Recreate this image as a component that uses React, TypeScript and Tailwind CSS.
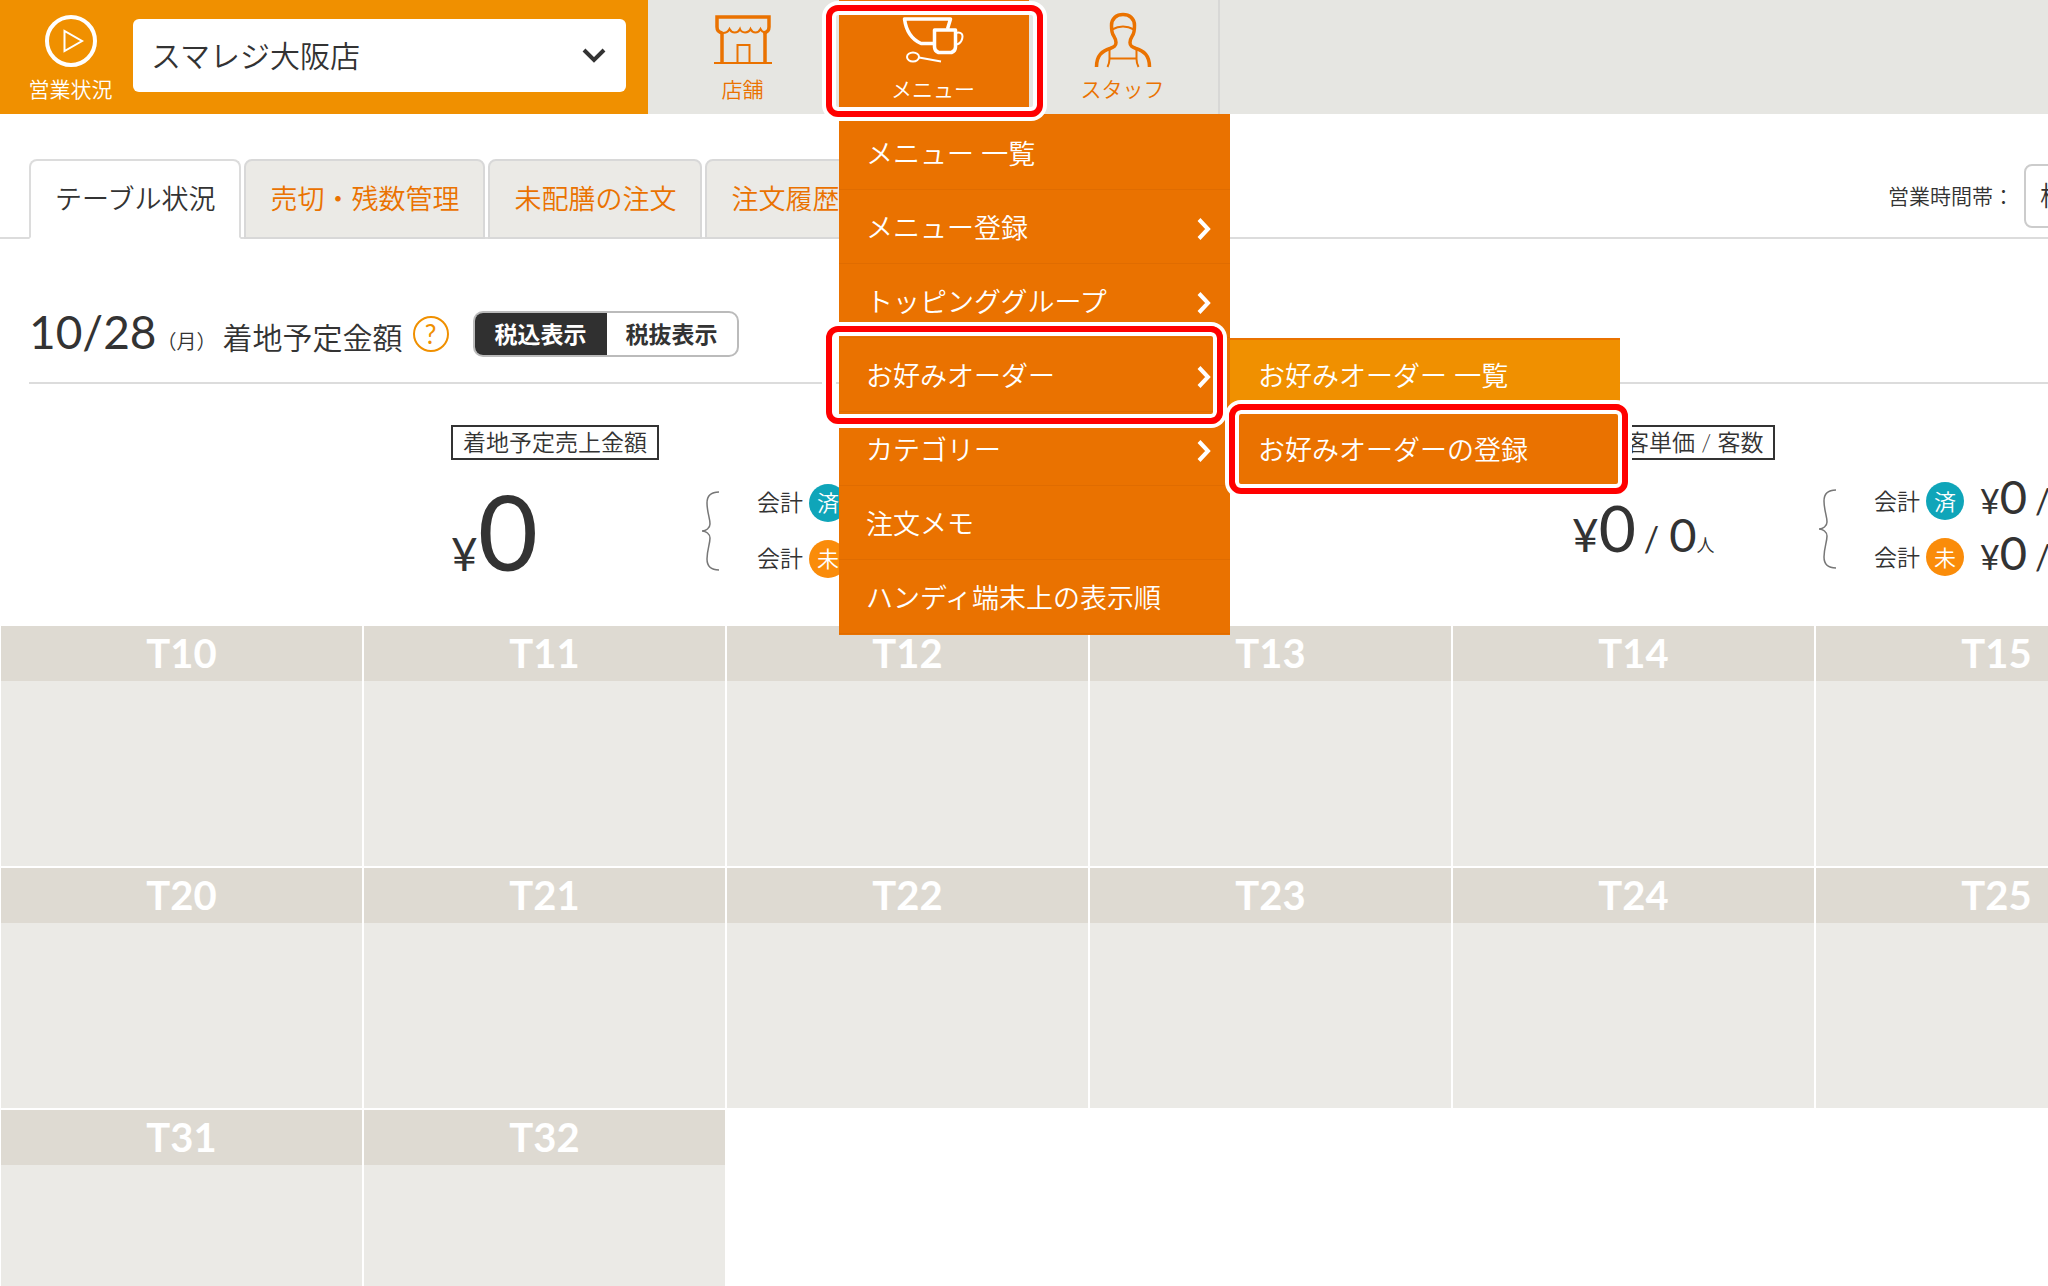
import type { ReactNode } from "react";

type MenuItem = {
  label: string;
  children?: string[];
  marked?: boolean;
};

const tabs = ["テーブル状況", "売切・残数管理", "未配膳の注文", "注文履歴"];

const menuItems: MenuItem[] = [
  { label: "メニュー 一覧" },
  { label: "メニュー登録", children: [] },
  { label: "トッピンググループ", children: [] },
  {
    label: "お好みオーダー",
    children: ["お好みオーダー 一覧", "お好みオーダーの登録"],
    marked: true,
  },
  { label: "カテゴリー", children: [] },
  { label: "注文メモ" },
  { label: "ハンディ端末上の表示順" },
];

const tables = [
  "T10", "T11", "T12", "T13", "T14", "T15",
  "T20", "T21", "T22", "T23", "T24", "T25",
  "T31", "T32",
];

/** Red frame with a white edge, laid over the step to click. */
function Marker({ className }: { className: string }) {
  return (
    <span
      aria-hidden
      className={`pointer-events-none absolute z-20 rounded-xl border-6 border-[#ff0000] shadow-[0_0_0_4px_#fff,inset_0_0_0_4px_#fff] ${className}`}
    />
  );
}

function PlayIcon() {
  return (
    <svg width="54" height="54" viewBox="0 0 54 54" fill="none" stroke="#fff" aria-hidden>
      <circle cx="27" cy="27" r="24" strokeWidth="4" />
      <path d="M20.5 17v20l17.5-10z" strokeWidth="2" />
    </svg>
  );
}

function ShopIcon() {
  return (
    <svg width="58" height="56" viewBox="0 0 58 56" fill="none" stroke="currentColor" aria-hidden>
      <path
        d="M8.5 21C5 20.5 3 18 3 15V5h52v10c0 3-2 5.500-5.500 6"
        strokeWidth="3.5"
      />
      <path
        d="M7 21c4 .5 7-1 8.500-4 2 4.500 8.500 4.500 10.500 0 1.500 4.500 8.500 4.500 10.500 0 2 4.500 8 4.500 10 0 1.500 3 3 4 6 4"
        strokeWidth="2"
      />
      <path d="M8 20v31M51 20v31" strokeWidth="3.5" />
      <path d="M0 51h58M23.500 51V33h12v18" strokeWidth="2" />
    </svg>
  );
}

function CupIcon() {
  return (
    <svg width="64" height="52" viewBox="0 -4 64 52" fill="none" stroke="#fff" aria-hidden>
      <path
        d="M32 27.500H20C10 23 5 14 3.500 3h46l-3 10"
        strokeWidth="3.5"
        strokeLinejoin="round"
      />
      <path
        d="M33.500 14h21v17q0 4-4 5.500H37.500q-4-1.500-4-5.500z"
        strokeWidth="3.5"
        strokeLinejoin="round"
      />
      <path d="M54.500 17c6-2 8.500 2 6 7.500-1 2-3 4-6 4" strokeWidth="2" />
      <ellipse cx="12" cy="41" rx="6" ry="4.5" strokeWidth="2" />
      <path d="M18 41.500l22 4" strokeWidth="2" />
    </svg>
  );
}

function StaffIcon() {
  return (
    <svg width="58" height="56" viewBox="0 0 58 56" fill="none" stroke="currentColor" aria-hidden>
      <path
        d="M2.500 55c0-12 6-16 13.500-18.500 4-1.500 6-2.500 6-6 0-3-1-4.500-2.500-7-1.500-2-2-5-2-10 0-7 5-11 11.500-11s11.500 4 11.500 11c0 5-.5 8-2 10-1.500 2.500-2.500 4-2.500 7 0 3.500 2 4.500 6 6C49.500 39 55.500 43 55.500 55"
        strokeWidth="3.5"
      />
      <path
        d="M18 17.500q11-6 22 0M15.500 37v10q0 4-2 8M42.500 37v10q0 4 2 8M15.500 46.500h27"
        strokeWidth="2"
      />
    </svg>
  );
}

function Chevron() {
  return (
    <svg width="16" height="22" viewBox="0 0 16 22" fill="none" aria-hidden>
      <path d="M3 1.500l9 9.500-9 9.500" stroke="#fff" strokeWidth="4" />
    </svg>
  );
}

function Brace() {
  return (
    <svg width="20" height="80" viewBox="0 0 20 80" fill="none" stroke="#777" aria-hidden>
      <path
        d="M18 1C10 1 6 4 6 12c0 9 3 15 3 21 0 4-4 7-8 7 4 0 8 3 8 7 0 6-3 12-3 21 0 8 4 11 12 11"
        strokeWidth="1.5"
      />
    </svg>
  );
}

function NavButton({
  label,
  icon,
  active = false,
}: {
  label: string;
  icon: ReactNode;
  active?: boolean;
}) {
  return (
    <button
      type="button"
      className={`flex h-full w-full flex-col items-center justify-between pt-3 pr-0.5 pb-[13px] text-[21px] leading-6 ${
        active ? "bg-[#ea7200] text-white" : "text-[#ea7200]"
      }`}
    >
      {icon}
      {label}
    </button>
  );
}

function MenuDropdown() {
  return (
    <ul className="absolute top-full left-0 z-10 w-[391px] bg-[#ea7200] pt-0.5 pb-px text-[27px] text-white">
      {menuItems.map((item) => (
        <li key={item.label} className="relative">
          <a
            href="#"
            className="flex h-[74px] items-center justify-between border-b border-[#e06c00] pt-1 pr-[18px] pl-[27px]"
          >
            {item.label}
            {item.children && <Chevron />}
          </a>
          {item.marked && <Marker className="-top-3 -left-[13px] h-[98px] w-[397px]" />}
          {item.children && item.children.length > 0 && (
            <ul className="absolute top-0 left-full w-[390px]">
              <li>
                <a
                  href="#"
                  className="flex h-[74px] items-center border-t-2 border-[#ea7200] bg-[#f09000] pl-7"
                >
                  {item.children[0]}
                </a>
              </li>
              <li className="relative">
                <a href="#" className="flex h-[74px] items-center bg-[#ea7200] pt-0.5 pl-7">
                  {item.children[1]}
                </a>
                <Marker className="-top-2 -left-px h-[90px] w-[399px]" />
              </li>
            </ul>
          )}
        </li>
      ))}
    </ul>
  );
}

function Header() {
  return (
    <header className="flex h-[114px] bg-[#e6e6e2]">
      <div className="flex w-[648px] bg-[#f09000] pr-[22px]">
        <a
          href="#"
          className="flex flex-1 flex-col items-center justify-between pt-3.5 pb-[13px] pl-2 text-[21px] leading-6 text-white"
        >
          <PlayIcon />
          営業状況
        </a>
        <div className="relative mt-[19px] h-[73px] w-[493px]">
          <select
            aria-label="店舗"
            className="h-full w-full appearance-none rounded-md bg-white px-[18px] text-[30px]"
          >
            <option>スマレジ大阪店</option>
          </select>
          <svg
            width="24"
            height="18"
            viewBox="0 0 24 18"
            fill="none"
            aria-hidden
            className="pointer-events-none absolute top-[28px] right-5"
          >
            <path d="M2 3l10 10L22 3" stroke="#333" strokeWidth="4" />
          </svg>
        </div>
      </div>
      <nav className="flex">
        <div className="w-[191px]">
          <NavButton label="店舗" icon={<ShopIcon />} />
        </div>
        <div className="relative w-[190px]">
          <NavButton label="メニュー" icon={<CupIcon />} active />
          <MenuDropdown />
          <Marker className="top-[5px] -left-[13px] h-[112px] w-[217px]" />
        </div>
        <div className="w-[191px] border-r-2 border-[#d8d8d6]">
          <NavButton label="スタッフ" icon={<StaffIcon />} />
        </div>
      </nav>
    </header>
  );
}

function TabBar() {
  return (
    <div className="flex items-end justify-between border-b-2 border-[#dcdcdc] pl-[29px]">
      <div role="tablist" className="-mb-0.5 flex gap-[3px] pt-[45px] text-[27px]">
        {tabs.map((tab, i) => (
          <button
            key={tab}
            type="button"
            role="tab"
            aria-selected={i === 0}
            className={`h-20 rounded-t-lg border-2 px-6 ${
              i === 0
                ? "border-[#dcdcdc] border-b-white bg-white"
                : "border-[#d8d8d8] bg-[#ebeae6] text-[#ea7200]"
            }`}
          >
            {tab}
          </button>
        ))}
      </div>
      <div className="-mr-40 mb-[9px] flex items-center gap-[10px]">
        <label htmlFor="hours" className="text-[21px]">
          営業時間帯：
        </label>
        <select
          id="hours"
          className="h-16 w-[184px] appearance-none rounded-lg border-2 border-[#ccc] bg-white px-3.5 text-[27px]"
        >
          <option>標準</option>
        </select>
      </div>
    </div>
  );
}

function DateRow() {
  return (
    <div className="ml-[29px] flex h-[145px] items-center border-b-2 border-[#dcdcdc] pt-[47px]">
      <h1 className="flex items-baseline">
        <span className="text-[46px] leading-none font-normal">10/28</span>
        <span className="text-[20px]">（月）</span>
        <span className="ml-1.5 text-[30px]">着地予定金額</span>
      </h1>
      <button
        type="button"
        aria-label="ヘルプ"
        className="ml-2.5 size-9 rounded-full border-2 border-[#f09000] text-[26px] leading-none font-normal text-[#f09000]"
      >
        ?
      </button>
      <div className="ml-6 flex h-[46px] overflow-hidden rounded-[10px] border-2 border-[#bbb] text-[23px] font-bold">
        <button type="button" className="w-[132px] bg-[#303030] text-white">
          税込表示
        </button>
        <button type="button" className="w-[130px]">
          税抜表示
        </button>
      </div>
    </div>
  );
}

function PaymentLine({ mark, tone, value }: { mark: string; tone: string; value?: ReactNode }) {
  return (
    <div className="flex h-14 items-center text-[23px]">
      会計
      <span
        className={`ml-1.5 flex size-[38px] items-center justify-center rounded-full text-[22px] text-white ${tone}`}
      >
        {mark}
      </span>
      {value}
    </div>
  );
}

function Breakdown({ value }: { value?: ReactNode }) {
  return (
    <div className="flex items-center gap-9">
      <Brace />
      <div>
        <PaymentLine mark="済" tone="bg-[#0fa5b9]" value={value} />
        <PaymentLine mark="未" tone="bg-[#fa8c0a]" value={value} />
      </div>
    </div>
  );
}

function Summary() {
  const perGuest = (
    <span className="ml-4 flex items-baseline pb-1 font-normal">
      <span className="text-[34px]">¥</span>
      <span className="text-[47px] leading-none">0</span>
      <span className="ml-2 text-[34px]">/</span>
    </span>
  );

  return (
    <section className="flex h-[242px] overflow-hidden pt-[41px] pl-[451px]">
      <div className="w-[1117px] shrink-0">
        <h2 className="inline-flex h-[35px] items-center border-2 border-[#333] px-2.5 text-[23px]">
          着地予定売上金額
        </h2>
        <div className="mt-[13px] flex items-center">
          <p className="flex w-[250px] items-baseline pt-1.5 font-normal">
            <span className="text-[46px]">¥</span>
            <span className="text-[104px] leading-none">0</span>
          </p>
          <Breakdown />
        </div>
      </div>
      <div className="shrink-0">
        <h2 className="ml-[46px] inline-flex h-[35px] items-center border-2 border-[#333] px-2.5 text-[23px]">
          客単価 / 客数
        </h2>
        <div className="mt-[13px] flex items-center">
          <p className="flex w-[250px] items-baseline pt-1.5 pl-1 font-normal">
            <span className="text-[46px]">¥</span>
            <span className="text-[64px] leading-none">0</span>
            <span className="ml-2 text-[34px]">/</span>
            <span className="ml-2.5 text-[47px] leading-none">0</span>
            <span className="text-[18px] font-[350]">人</span>
          </p>
          <Breakdown value={perGuest} />
        </div>
      </div>
    </section>
  );
}

function TableGrid() {
  return (
    <section className="grid grid-cols-[repeat(6,361px)] gap-0.5 pl-px">
      {tables.map((name) => (
        <article key={name} className="h-60 bg-[#ebeae6]">
          <h3 className="flex h-[55px] items-center justify-center bg-[#dedad2] pb-0.5 text-[40px] leading-none font-bold text-white">
            {name}
          </h3>
        </article>
      ))}
    </section>
  );
}

export default function App() {
  return (
    <div className="h-screen overflow-hidden bg-white font-[Lato,'Noto_Sans_CJK_JP',sans-serif] font-[350] text-[#333]">
      <Header />
      <TabBar />
      <DateRow />
      <Summary />
      <TableGrid />
    </div>
  );
}
